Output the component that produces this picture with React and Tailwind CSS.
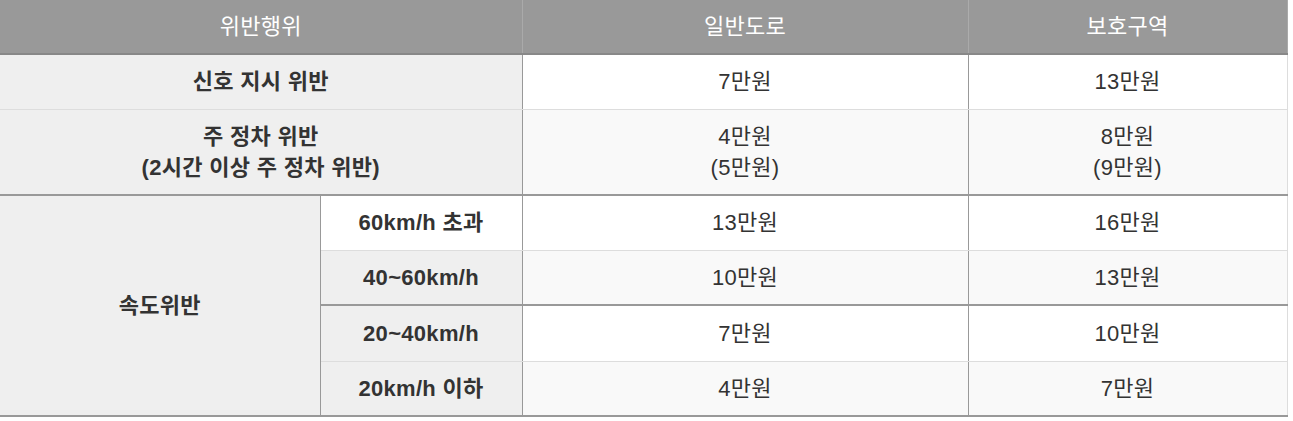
const rows = [
  { label: "60km/h 초과", road: "13만원", zone: "16만원", sub: "bg-white", val: "bg-white", border: "border-b border-b-[#dddddd]" },
  { label: "40~60km/h", road: "10만원", zone: "13만원", sub: "bg-[#efefef]", val: "bg-[#f9f9f9]", border: "border-b-2 border-b-[#999999]" },
  { label: "20~40km/h", road: "7만원", zone: "10만원", sub: "bg-[#efefef]", val: "bg-white", border: "border-b border-b-[#dddddd]" },
  { label: "20km/h 이하", road: "4만원", zone: "7만원", sub: "bg-[#efefef]", val: "bg-[#f9f9f9]", border: "border-b-2 border-b-[#999999]" },
];

export default function App() {
  return (
    <div className="bg-white w-[1293px] h-[421px] font-['Liberation_Sans','Noto_Sans_CJK_KR',sans-serif] text-[#333333]">
      <table className="w-[1287px] border-collapse table-fixed text-center text-[22px] tracking-[0.3px]">
        <colgroup>
          <col className="w-[320px]" />
          <col className="w-[202px]" />
          <col className="w-[446px]" />
          <col className="w-[319px]" />
        </colgroup>
        <thead>
          <tr className="h-[54px] bg-[#999999] text-white text-[22px]">
            <th colSpan={2} className="font-normal border-r border-r-[#aaaaaa] border-b-2 border-b-[#888888]">위반행위</th>
            <th className="font-normal border-r border-r-[#aaaaaa] border-b-2 border-b-[#888888]">일반도로</th>
            <th className="font-normal border-r border-r-[#aaaaaa] border-b-2 border-b-[#888888]">보호구역</th>
          </tr>
        </thead>
        <tbody>
          <tr className="h-[55px]">
            <td colSpan={2} className="bg-[#efefef] font-bold border-b border-b-[#dddddd] border-r border-r-[#999999]">신호 지시 위반</td>
            <td className="bg-white border-b border-b-[#dddddd] border-r border-r-[#999999]">7만원</td>
            <td className="bg-white border-b border-b-[#dddddd] border-r border-r-[#dddddd]">13만원</td>
          </tr>
          <tr className="h-[86px] leading-[31px]">
            <td colSpan={2} className="bg-[#efefef] font-bold border-b-2 border-b-[#999999] border-r border-r-[#999999]">
              주 정차 위반
              <br />
              (2시간 이상 주 정차 위반)
            </td>
            <td className="bg-[#f9f9f9] border-b-2 border-b-[#999999] border-r border-r-[#999999]">
              4만원
              <br />
              (5만원)
            </td>
            <td className="bg-[#f9f9f9] border-b-2 border-b-[#999999] border-r border-r-[#dddddd]">
              8만원
              <br />
              (9만원)
            </td>
          </tr>
          {rows.map((r, i) => (
            <tr key={r.label} className={i === 2 ? "h-[56px]" : "h-[55px]"}>
              {i === 0 && (
                <td rowSpan={4} className="bg-[#efefef] font-bold border-b-2 border-b-[#999999] border-r border-r-[#999999]">
                  속도위반
                </td>
              )}
              <td className={`${r.sub} ${r.border} font-bold border-r border-r-[#999999]`}>{r.label}</td>
              <td className={`${r.val} ${r.border} border-r border-r-[#999999]`}>{r.road}</td>
              <td className={`${r.val} ${r.border} border-r border-r-[#dddddd]`}>{r.zone}</td>
            </tr>
          ))}
        </tbody>
      </table>
    </div>
  );
}
